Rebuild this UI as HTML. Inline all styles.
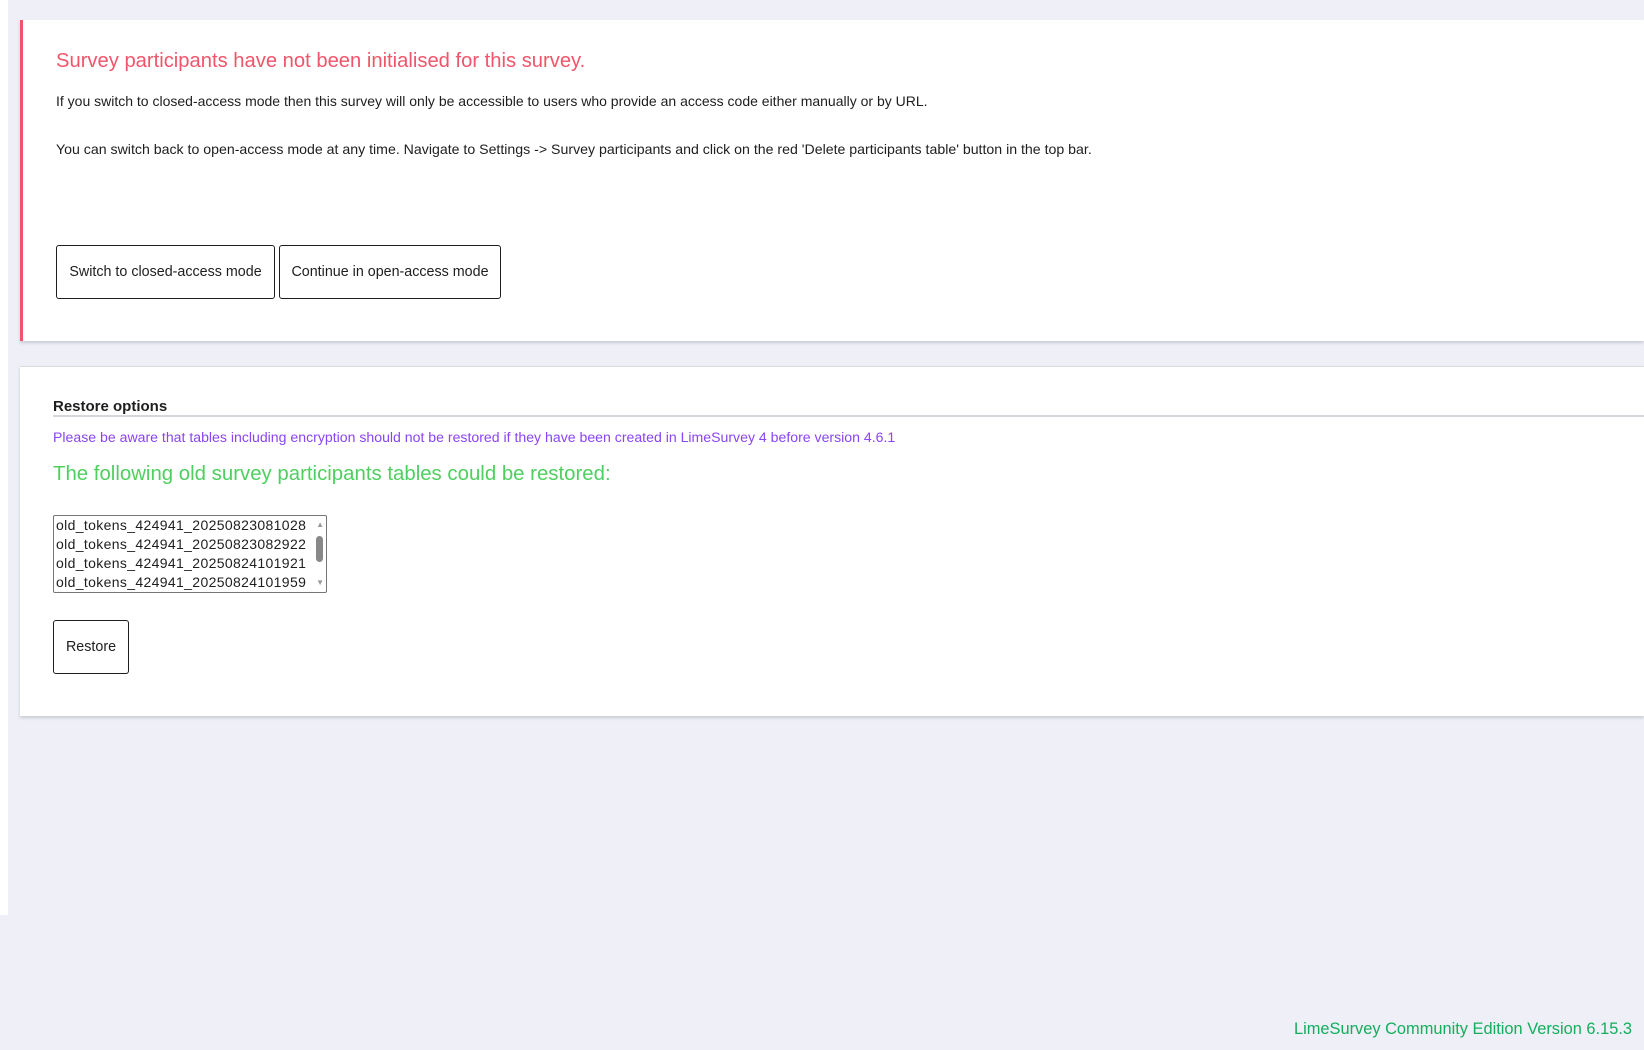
<!DOCTYPE html>
<html><head><meta charset="utf-8"><style>
body{margin:0;width:1644px;height:1050px;background:#eeeff7;font-family:"Liberation Sans",sans-serif;position:relative;overflow:hidden;color:#1e1e1e}
.strip{position:absolute;left:0;top:0;width:8px;height:915px;background:#fff}
.card{position:absolute;left:20px;right:0;background:#fff;box-shadow:0 2px 3px rgba(0,0,0,.15)}
.c1{top:20px;height:321px;border-left:3px solid #f0556a}
.c2{top:366px;height:349px;border-top:1px solid #ddd}
.abs{position:absolute;white-space:nowrap}
.btn{position:absolute;border:1px solid #1e1e1e;border-radius:3px;background:#fff;font-size:14.3px;display:flex;align-items:center;justify-content:center}
</style></head><body>
<div class="strip"></div>
<div class="card c1">
 <div class="abs" style="left:33px;top:30px;font-size:20.2px;color:#f0556a">Survey participants have not been initialised for this survey.</div>
 <div class="abs" style="left:33px;top:73px;font-size:14px">If you switch to closed-access mode then this survey will only be accessible to users who provide an access code either manually or by URL.</div>
 <div class="abs" style="left:33px;top:121px;font-size:14.15px">You can switch back to open-access mode at any time. Navigate to Settings -&gt; Survey participants and click on the red 'Delete participants table' button in the top bar.</div>
 <div class="btn" style="left:33px;top:225px;width:217px;height:52px">Switch to closed-access mode</div>
 <div class="btn" style="left:256px;top:225px;width:220px;height:52px">Continue in open-access mode</div>
</div>
<div class="card c2">
 <div class="abs" style="left:33px;top:31px;font-size:15px;font-weight:bold;color:#1e1e1e">Restore options</div>
 <div style="position:absolute;left:33px;right:0;top:48px;height:2px;background:#d6d6dd"></div>
 <div class="abs" style="left:33px;top:62px;font-size:14.1px;color:#8b44f7">Please be aware that tables including encryption should not be restored if they have been created in LimeSurvey 4 before version 4.6.1</div>
 <div class="abs" style="left:33px;top:96px;font-size:20.4px;color:#4fcf5f">The following old survey participants tables could be restored:</div>
 <div style="position:absolute;left:33px;top:148px;width:272px;height:76px;border:1px solid #767676;border-radius:2px;font-size:14px;letter-spacing:0.35px;line-height:19px">
  <div style="padding-left:2px">old_tokens_424941_20250823081028</div>
  <div style="padding-left:2px">old_tokens_424941_20250823082922</div>
  <div style="padding-left:2px">old_tokens_424941_20250824101921</div>
  <div style="padding-left:2px">old_tokens_424941_20250824101959</div>
  <div style="position:absolute;right:3px;top:20px;width:7px;height:26px;background:#888;border-radius:4px"></div>
  <div style="position:absolute;right:2px;top:5px;font-size:8px;color:#999;line-height:8px;letter-spacing:0">▲</div>
  <div style="position:absolute;right:2px;bottom:5px;font-size:8px;color:#999;line-height:8px;letter-spacing:0">▼</div>
 </div>
 <div class="btn" style="left:33px;top:253px;width:74px;height:52px">Restore</div>
</div>
<div class="abs" style="right:12px;top:1020px;font-size:16.4px;color:#14ae5c">LimeSurvey Community Edition Version 6.15.3</div>
</body></html>
